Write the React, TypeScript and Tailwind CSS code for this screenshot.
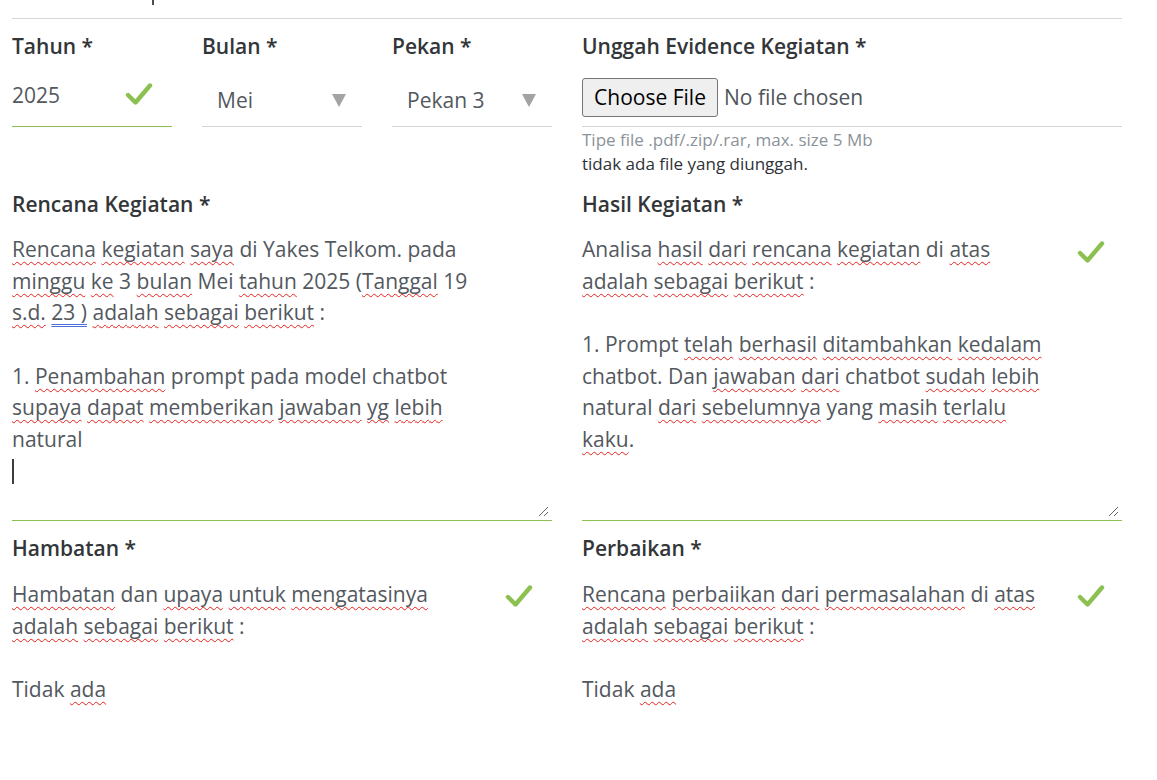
const rencana = [
  '{Rencana} {kegiatan} {saya} di Yakes Telkom. pada',
  '{minggu} {ke} 3 {bulan} Mei {tahun} 2025 ({Tanggal} 19',
  '{s.d.} [23 )] {adalah} {sebagai} {berikut} :',
  '',
  '1. {Penambahan} prompt pada model chatbot',
  '{supaya} {dapat} {memberikan} {jawaban} {yg} {lebih}',
  'natural',
]

const hasil = [
  'Analisa {hasil} {dari} {rencana} {kegiatan} di {atas}',
  '{adalah} {sebagai} {berikut} :',
  '',
  '1. Prompt {telah} {berhasil} {ditambahkan} {kedalam}',
  'chatbot. Dan {jawaban} {dari} chatbot {sudah} {lebih}',
  'natural {dari} {sebelumnya} yang {masih} {terlalu}',
  '{kaku}.',
]

const hambatan = [
  '{Hambatan} dan {upaya} {untuk} {mengatasinya}',
  '{adalah} {sebagai} {berikut} :',
  '',
  'Tidak {ada}',
]

const perbaikan = [
  '{Rencana} {perbaiikan} {dari} {permasalahan} di {atas}',
  '{adalah} {sebagai} {berikut} :',
  '',
  'Tidak {ada}',
]

// {word} = spelling squiggle, [text] = grammar double underline
function Line({ text }: { text: string }) {
  if (!text) return <div className="h-[31.7px]" />
  const parts = text.split(/(\{[^}]+\}|\[[^\]]+\])/)
  return (
    <div className="h-[31.7px] whitespace-pre">
      {parts.map((p, i) => {
        if (p.startsWith('{'))
          return (
            <span key={i} className="underline decoration-wavy decoration-[#e8201c] decoration-[1.2px] underline-offset-[4px] [text-decoration-skip-ink:none]">
              {p.slice(1, -1)}
            </span>
          )
        if (p.startsWith('['))
          return (
            <span key={i} className="underline decoration-double decoration-[#4d6fd8] decoration-1 underline-offset-[4px] [text-decoration-skip-ink:none]">
              {p.slice(1, -1)}
            </span>
          )
        return <span key={i}>{p}</span>
      })}
    </div>
  )
}

function Check({ className = '' }: { className?: string }) {
  return (
    <svg width="28" height="24" viewBox="0 0 28 24" className={className}>
      <polyline points="3,13 10.5,20.5 25,3.5" fill="none" stroke="#8cc152" strokeWidth="4.4" strokeLinecap="round" strokeLinejoin="round" />
    </svg>
  )
}

function Label({ children }: { children: React.ReactNode }) {
  return <div className="h-[28px] text-[21px] leading-[28px] font-semibold text-[#333639]">{children}</div>
}

function Caret() {
  return (
    <svg width="14" height="14" viewBox="0 0 14 14">
      <polygon points="0,1 14,1 7,14" fill="#a3a3a3" />
    </svg>
  )
}

function Resize() {
  return (
    <svg width="12" height="12" viewBox="0 0 12 12" className="absolute right-[3px] bottom-[3px]">
      <line x1="2" y1="11" x2="11" y2="2" stroke="#666" strokeWidth="1" />
      <line x1="7" y1="11" x2="11" y2="7" stroke="#666" strokeWidth="1" />
    </svg>
  )
}

function TextBlock({ lines, check, pr, cursor, border, tall }: {
  lines: string[]; check?: boolean; pr?: string; cursor?: boolean; border?: boolean; tall?: boolean
}) {
  return (
    <div className={`relative flex justify-between items-start ${tall ? 'h-[303px] pt-[16px]' : 'pt-[17px]'} ${border ? 'border-b border-[#8cc152]' : ''} ${pr ?? ''}`}>
      <div className="text-[21px] leading-[31.7px] text-[#53585e]">
        {lines.map((l, i) => <Line key={i} text={l} />)}
        {cursor && (
          <div className="h-[31.7px] flex items-center">
            <span className="inline-block w-[1.5px] h-[25px] bg-[#3a3d40]" />
          </div>
        )}
      </div>
      {check && <Check className={tall ? 'mt-[6px]' : 'mt-[5px]'} />}
      {tall && <Resize />}
    </div>
  )
}

export default function App() {
  return (
    <div className="w-full h-[780px] overflow-hidden bg-white font-['Open_Sans',sans-serif]">
      <div className="ml-[12px] w-[1110px]">
        <div className="h-[18px]">
          <div className="ml-[140px] w-[2px] h-[5px] bg-[#4b4f54]" />
        </div>

        {/* row 1 */}
        <div className="border-t border-[#d3d7db] pt-[13px] grid grid-cols-[160px_160px_160px_540px] gap-x-[30px]">
          <div>
            <Label>Tahun *</Label>
            <div className="h-[67px] border-b border-[#8cc152] pt-[19px] pr-[19px] flex justify-between items-start">
              <span className="text-[21px] leading-[32px] text-[#53585e]">2025</span>
              <Check className="mt-[3px]" />
            </div>
          </div>
          <div>
            <Label>Bulan *</Label>
            <div className="h-[67px] border-b border-[#d3d7db] pt-[24px] pl-[15px] pr-[16px] flex justify-between items-start">
              <span className="text-[21px] leading-[32px] text-[#53585e]">Mei</span>
              <span className="mt-[9px]"><Caret /></span>
            </div>
          </div>
          <div>
            <Label>Pekan *</Label>
            <div className="h-[67px] border-b border-[#d3d7db] pt-[24px] pl-[15px] pr-[16px] flex justify-between items-start">
              <span className="text-[21px] leading-[32px] text-[#53585e]">Pekan 3</span>
              <span className="mt-[9px]"><Caret /></span>
            </div>
          </div>
          <div>
            <Label>Unggah Evidence Kegiatan *</Label>
            <div className="h-[67px] border-b border-[#d3d7db] pt-[18px] flex items-start">
              <button className="h-[39px] w-[136px] rounded-[3px] border border-[#767676] bg-[#efefef] text-[21px] text-black leading-none">
                Choose File
              </button>
              <span className="ml-[6px] text-[21px] leading-[39px] text-[#50555a]">No file chosen</span>
            </div>
            <div className="mt-[1px] text-[17px] leading-[24px] text-[#8b9299]">Tipe file .pdf/.zip/.rar, max. size 5 Mb</div>
            <div className="text-[17px] leading-[24px] text-[#2f3236]">tidak ada file yang diunggah.</div>
          </div>
        </div>

        {/* row 2 */}
        <div className="mt-[14px] grid grid-cols-2 gap-x-[30px]">
          <div>
            <Label>Rencana Kegiatan *</Label>
            <TextBlock lines={rencana} cursor border tall />
          </div>
          <div>
            <Label>Hasil Kegiatan *</Label>
            <TextBlock lines={hasil} check pr="pr-[17px]" border tall />
          </div>
        </div>

        {/* row 3 */}
        <div className="mt-[13px] grid grid-cols-2 gap-x-[30px]">
          <div>
            <Label>Hambatan *</Label>
            <TextBlock lines={hambatan} check pr="pr-[19px]" />
          </div>
          <div>
            <Label>Perbaikan *</Label>
            <TextBlock lines={perbaikan} check pr="pr-[17px]" />
          </div>
        </div>
      </div>
    </div>
  )
}
